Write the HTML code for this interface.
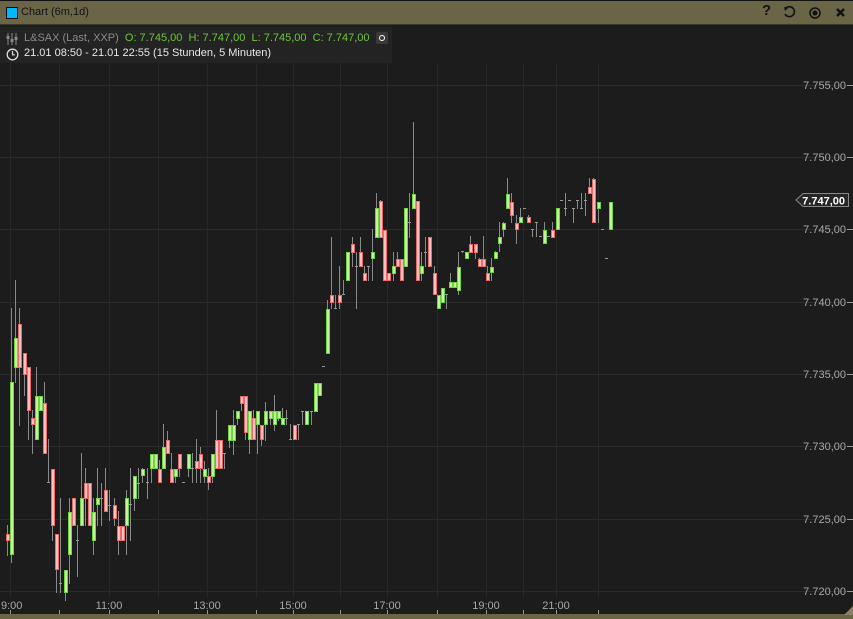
<!DOCTYPE html><html><head><style>
body{margin:0;width:853px;height:619px;overflow:hidden;background:#1c1c1c;font-family:"Liberation Sans",sans-serif;position:relative}
.t{position:absolute;white-space:nowrap}
</style></head><body>
<div style="position:absolute;left:0;top:0;width:853px;height:25px;background:#6b6548;border-top:1px solid #111;border-bottom:1px solid #3a3828;box-sizing:border-box"></div>
<div style="position:absolute;left:6px;top:7px;width:10px;height:10px;background:#00b8ff;border:1px solid #111"></div>
<div class="t" style="left:21px;top:6px;font-size:11px;color:#111">Chart (6m,1d)</div>
<div class="t" style="left:762px;top:2px;font-size:15px;font-weight:bold;color:#111">?</div>
<svg style="position:absolute;left:782px;top:5px" width="70" height="16">
<path d="M4 3 A5 5 0 1 1 3 9" fill="none" stroke="#111" stroke-width="1.6"/><path d="M2 2 L6 3 L3 6 Z" fill="#111"/>
<circle cx="33" cy="8" r="5" fill="none" stroke="#111" stroke-width="1.5"/><circle cx="33" cy="8" r="2.5" fill="#111"/>
<path d="M55 4 L62 11 M62 4 L55 11" stroke="#111" stroke-width="2.5"/>
</svg>
<div style="position:absolute;left:0;top:614px;width:853px;height:5px;background:#6b6548"></div>
<div style="position:absolute;left:0;top:27px;width:392px;height:36px;background:#232323"></div>
<svg style="position:absolute;left:6px;top:33px" width="14" height="12"><path d="M2 0V12M6 0V12M10 0V12" stroke="#888"/><rect x="0.5" y="3" width="3" height="3" fill="#888"/><rect x="4.5" y="6" width="3" height="3" fill="#888"/><rect x="8.5" y="4" width="3" height="3" fill="#888"/></svg>
<div class="t" style="left:24px;top:32px;font-size:11px;color:#8a8a8a">L&amp;SAX (Last, XXP) <span style="color:#6cc83c">&nbsp;O: 7.745,00 &nbsp;H: 7.747,00 &nbsp;L: 7.745,00 &nbsp;C: 7.747,00</span></div>
<div style="position:absolute;left:376px;top:32px;width:12px;height:12px;background:#3a3a3a;border-radius:2px"></div>
<div style="position:absolute;left:379px;top:35px;width:4px;height:4px;border:1.5px solid #fff;border-radius:50%"></div>
<svg style="position:absolute;left:6px;top:48px" width="13" height="13"><circle cx="6.5" cy="6.5" r="5.3" fill="none" stroke="#ddd" stroke-width="1.3"/><path d="M6.5 3V6.8H9" fill="none" stroke="#ddd" stroke-width="1.2"/></svg>
<div class="t" style="left:24px;top:47px;font-size:11px;color:#e8e8e8">21.01 08:50 - 21.01 22:55 (15 Stunden, 5 Minuten)</div>
<svg id="c" style="position:absolute;left:0;top:63px" width="853" height="552" viewBox="0 63 853 552"></svg>
<script>
var s='';
var P=[[85,'7.755,00'],[157,'7.750,00'],[229,'7.745,00'],[302,'7.740,00'],[374,'7.735,00'],[446,'7.730,00'],[519,'7.725,00'],[591,'7.720,00']];
P.forEach(function(p){s+='<line x1="0" x2="847" y1="'+p[0]+'.5" y2="'+p[0]+'.5" stroke="#2b2b2b"/><line x1="847" x2="853" y1="'+p[0]+'.5" y2="'+p[0]+'.5" stroke="#999"/><text x="846" y="'+(p[0]+4)+'" text-anchor="end" font-size="11" fill="#a8a8a8" font-family="Liberation Sans">'+p[1]+'</text>';});
[10,59,109,158,207,256,293,340,387,437,486,523,556,598].forEach(function(x){s+='<line x1="'+x+'.5" x2="'+x+'.5" y1="63" y2="598" stroke="#282828"/><line x1="'+x+'.5" x2="'+x+'.5" y1="610" y2="614" stroke="#999"/>';});
[[-2,'9:00'],[109,'11:00'],[207,'13:00'],[293,'15:00'],[387,'17:00'],[486,'19:00'],[556,'21:00']].forEach(function(t){s+='<text x="'+(t[0]<0?1:t[0])+'" y="609" '+(t[0]<0?'':'text-anchor="middle"')+' font-size="11" fill="#a8a8a8" font-family="Liberation Sans">'+t[1]+'</text>';});
var C=[[6,525,555,534,540,'r'],[10,308,562,382,554,'g'],[14,280,382,338,367,'g'],[18,308,425,324,367,'r'],[23,353,395,353,374,'r'],[27,367,439,367,410,'r'],[31,410,453,418,424,'r'],[35,367,439,396,439,'g'],[39,396,410,396,410,'g'],[43,382,453,403,453,'r'],[47,439,482,482,482,'d'],[51,469,540,469,525,'r'],[55,534,592,534,569,'r'],[59,498,592,583,583,'d'],[64,570,600,570,592,'g'],[68,498,583,512,554,'g'],[72,498,525,498,525,'r'],[76,525,576,540,540,'d'],[80,453,525,498,525,'g'],[84,468,525,483,498,'r'],[88,483,525,483,525,'r'],[92,498,554,512,540,'g'],[96,468,525,498,504,'g'],[100,483,525,498,498,'d'],[104,468,511,490,511,'r'],[108,490,520,505,505,'d'],[113,498,525,505,518,'r'],[117,511,554,526,540,'r'],[121,526,540,526,540,'r'],[125,490,554,498,525,'g'],[129,468,540,504,504,'d'],[133,476,510,476,498,'g'],[137,468,498,483,483,'d'],[141,468,482,469,475,'g'],[146,468,498,482,482,'d'],[150,454,482,454,468,'g'],[154,454,468,454,468,'g'],[158,460,482,469,482,'r'],[162,424,468,447,468,'g'],[166,431,453,440,453,'r'],[170,453,482,469,482,'r'],[174,469,482,469,476,'g'],[178,454,476,454,468,'r'],[182,482,482,482,482,'d'],[187,454,476,454,468,'g'],[191,453,482,468,468,'d'],[195,439,482,461,468,'r'],[199,447,482,454,468,'r'],[203,461,482,469,476,'g'],[207,468,489,476,482,'r'],[211,454,482,454,476,'g'],[215,410,468,440,468,'r'],[219,440,468,440,468,'r'],[223,453,468,453,453,'d'],[228,425,447,425,440,'g'],[232,410,454,425,440,'g'],[236,411,424,411,418,'g'],[240,396,410,396,403,'r'],[244,396,439,396,432,'r'],[248,411,453,411,439,'g'],[252,410,439,418,439,'r'],[256,411,453,411,424,'g'],[260,425,445,425,439,'r'],[264,402,440,411,424,'g'],[269,411,424,411,418,'g'],[273,395,430,411,424,'g'],[277,411,420,411,418,'g'],[281,408,424,418,424,'g'],[285,410,424,418,418,'d'],[289,424,439,439,439,'d'],[293,425,439,425,439,'r'],[297,424,439,424,424,'d'],[301,411,424,411,411,'d'],[305,411,424,411,424,'g'],[310,411,424,411,411,'d'],[314,383,411,383,411,'g'],[318,383,395,383,395,'g'],[322,366,366,366,366,'d'],[326,300,353,309,353,'g'],[330,237,308,295,302,'r'],[334,295,308,308,308,'d'],[338,266,308,295,302,'r'],[342,280,294,294,294,'d'],[346,252,280,252,280,'g'],[351,237,266,244,252,'r'],[355,252,308,266,266,'d'],[359,237,266,252,266,'r'],[363,266,280,273,280,'r'],[367,266,280,266,266,'d'],[371,229,280,252,258,'g'],[375,193,237,208,237,'g'],[379,200,237,201,237,'r'],[383,230,280,230,280,'r'],[387,273,280,273,280,'r'],[392,252,280,266,273,'g'],[396,252,266,259,266,'r'],[400,259,280,259,280,'r'],[404,208,266,208,266,'g'],[408,193,237,222,222,'d'],[412,122,208,194,208,'g'],[416,201,280,201,280,'r'],[420,252,280,266,273,'g'],[424,237,266,252,252,'d'],[428,237,266,237,266,'r'],[433,266,294,273,294,'r'],[437,295,308,295,308,'g'],[441,288,302,288,302,'g'],[445,294,308,294,294,'d'],[449,273,287,282,287,'g'],[453,282,287,282,287,'g'],[457,252,294,267,290,'g'],[461,251,252,251,251,'d'],[465,252,258,252,258,'g'],[469,236,252,244,252,'r'],[474,244,258,244,252,'r'],[478,258,266,259,266,'r'],[482,236,266,259,266,'r'],[486,266,280,273,280,'r'],[490,258,280,267,272,'g'],[494,251,258,252,258,'g'],[498,222,251,237,243,'g'],[502,222,236,223,229,'g'],[506,178,208,194,208,'g'],[510,193,222,202,215,'r'],[515,215,243,223,229,'r'],[519,208,222,217,222,'g'],[523,208,208,208,208,'d'],[527,215,222,217,222,'r'],[531,229,236,229,229,'d'],[535,222,236,222,222,'d'],[539,236,236,236,236,'d'],[543,222,243,230,243,'g'],[547,236,236,236,236,'d'],[551,222,237,230,237,'r'],[556,208,229,208,229,'g'],[560,200,200,200,200,'d'],[564,193,215,208,208,'d'],[568,200,200,200,200,'d'],[572,208,222,208,208,'d'],[576,200,208,200,200,'d'],[580,193,208,208,208,'d'],[584,193,215,200,200,'d'],[588,178,193,187,193,'r'],[592,178,222,179,222,'r'],[597,202,222,202,208,'g'],[601,229,229,229,229,'d'],[605,258,258,258,258,'d'],[609,202,229,202,229,'g']];
C.forEach(function(c){var x=c[0];s+='<line x1="'+(x+1.5)+'" x2="'+(x+1.5)+'" y1="'+c[1]+'" y2="'+(c[2]+1)+'" stroke="#8a8a8a"/>';
if(c[5]=='d'){s+='<line x1="'+x+'" x2="'+(x+3)+'" y1="'+(c[3]+.5)+'" y2="'+(c[3]+.5)+'" stroke="#999"/>';}
else{var g=c[5]=='g';s+='<rect x="'+(x+.5)+'" y="'+(c[3]+.5)+'" width="3" height="'+Math.max(1,c[4]-c[3])+'" fill="'+(g?'#c8f0a0':'#ffc0c0')+'" stroke="'+(g?'#6cd83c':'#f06868')+'"/>';}});
s+='<path d="M803 193.5H848.5V206.5H803L796 200Z" fill="#262626" stroke="#888"/><text x="845" y="204.5" text-anchor="end" font-size="11" font-weight="bold" fill="#fff" font-family="Liberation Sans">7.747,00</text>';
s+='<path d="M853 606L844 615H853Z" fill="#8a8260"/>';
document.getElementById('c').innerHTML=s;
</script>
</body></html>
